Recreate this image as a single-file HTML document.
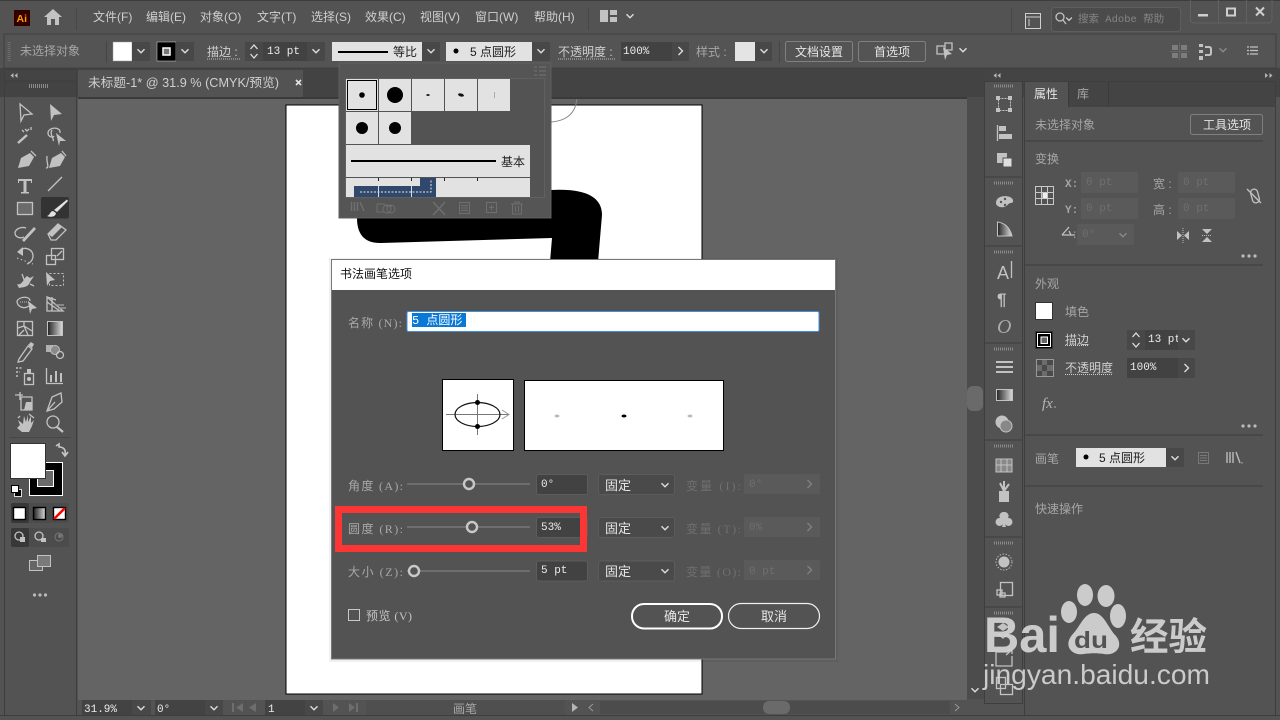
<!DOCTYPE html>
<html lang="zh"><head><meta charset="utf-8"><title>Illustrator</title>
<style>
html,body{margin:0;padding:0;background:#535353;width:1280px;height:720px;overflow:hidden}
svg{display:block}
text{font-family:"Liberation Sans","Noto Sans CJK SC",sans-serif;font-size:12px;fill:#c4c4c4}
.m{fill:#cfcfcf}
.d{fill:#a6a6a6}
.f{fill:#e6e6e6}
.k{fill:#1c1c1c}
.s{font-family:"Liberation Serif","Noto Sans CJK SC",serif;fill:#a8a8a8}
.t{font-family:"Liberation Mono","Noto Sans CJK SC",monospace;fill:#ececec;font-size:11px}
.o{font-family:"Liberation Mono","Noto Sans CJK SC",monospace;fill:#6f6f6f;font-size:11px}
.x{font-family:"Liberation Serif","Noto Sans CJK SC",serif;fill:#6f6f6f}
.i{fill:none;stroke:#c2c2c2;stroke-width:1.3}
.b{fill:#c2c2c2;stroke:none}
.c{fill:none;stroke:#dcdcdc;stroke-width:1.4}
.w{fill:#d6d6d6}
</style></head><body>
<svg width="1280" height="720" viewBox="0 0 1280 720" xmlns="http://www.w3.org/2000/svg">
<defs>
<path id="ch" d="M-3.5 -1.8L0 1.8L3.5 -1.8" fill="none" stroke="#dcdcdc" stroke-width="1.4"/>
<path id="ar" d="M-1.5 -4L2.5 0L-1.5 4" fill="none" stroke="#dcdcdc" stroke-width="1.4"/>
<linearGradient id="g" x1="0" x2="1"><stop offset="0" stop-color="#222"/><stop offset="1" stop-color="#ddd"/></linearGradient>
</defs>
<rect width="1280" height="720" fill="#535353"/>
<rect x="0" y="0" width="1280" height="1" fill="#3c3c3c"/>
<!-- canvas -->
<rect x="0" y="68" width="1280" height="29" fill="#434343"/>
<rect x="78" y="97" width="889" height="603" fill="#646464"/>
<rect x="967" y="97" width="17" height="603" fill="#4c4c4c"/>
<rect x="967" y="386" width="16" height="25" rx="6" fill="#6a6a6a"/>
<use href="#ch" transform="translate(975,690)"/>
<rect x="967" y="699" width="17" height="18" fill="#535353"/>
<rect x="286" y="105" width="416" height="589" fill="#fff" stroke="#000"/>
<path d="M577 97Q576 120 551 122" fill="none" stroke="#888"/>
<path d="M357 200L550 190Q602 187 602 215L598 262L550 262L552 238L380 243Q357 243 357 218Z" fill="#000"/>
<rect x="78" y="97" width="889" height="2" fill="#3a3a3a"/>

<!-- title bar -->
<rect x="14" y="10" width="16" height="16" fill="#330000"/>
<text x="16.500" y="22" style="font-size:10.500px;font-weight:bold;fill:#ff9a00">Ai</text>
<path d="M44 17L53 9L62 17H59V25H55V19H51V25H47V17Z" class="b"/>
<rect x="76" y="8" width="1" height="22" fill="#484848"/>
<text class="m" x="93" y="21">文件(F)</text>
<text class="m" x="146" y="21">编辑(E)</text>
<text class="m" x="200" y="21">对象(O)</text>
<text class="m" x="257" y="21">文字(T)</text>
<text class="m" x="311" y="21">选择(S)</text>
<text class="m" x="365" y="21">效果(C)</text>
<text class="m" x="420" y="21">视图(V)</text>
<text class="m" x="475" y="21">窗口(W)</text>
<text class="m" x="534" y="21">帮助(H)</text>
<rect x="588" y="8" width="1" height="22" fill="#484848"/>
<path d="M600 10H608V22H600ZM610 10H617V15H610ZM610 17H617V22H610Z" class="b"/>
<use href="#ch" transform="translate(630,16)"/>
<rect x="1011" y="8" width="1" height="24" fill="#484848"/>
<rect x="1025.500" y="13.500" width="15" height="15" fill="none" stroke="#cfcfcf"/><path d="M1026 17H1040M1029 19V26" stroke="#cfcfcf" fill="none"/>
<rect x="1051.500" y="7.500" width="129" height="24" rx="3" fill="#4b4b4b" stroke="#5e5e5e"/>
<circle cx="1060" cy="17" r="4" class="i"/><path d="M1063 20L1066 24" class="i"/><use href="#ch" transform="translate(1069,19) scale(.8)"/>
<text x="1078" y="22" style="font-family:'Liberation Mono','Noto Sans CJK SC',monospace;font-size:10.500px;fill:#858585">搜索 Adobe 帮助</text>
<path d="M1190.500 0V19Q1190.500 23 1194 23H1268Q1272 23 1272 19V0M1218.500 0V23M1246.500 0V23" fill="none" stroke="#626262"/>
<rect x="1198" y="14" width="10" height="2.500" fill="#cfcfcf"/>
<rect x="1227" y="8.500" width="8" height="7" fill="none" stroke="#cfcfcf" stroke-width="2"/>
<path d="M1256 7.500L1264 15.500M1264 7.500L1256 15.500" stroke="#cfcfcf" stroke-width="2"/>

<!-- control bar -->
<rect x="4" y="34" width="1272" height="34" fill="#545454" stroke="#3f3f3f"/>
<path d="M9 42V62" stroke="#6e6e6e" stroke-width="3" stroke-dasharray="1 1"/>
<text class="d" x="20" y="55">未选择对象</text>
<rect x="106" y="41" width="1" height="22" fill="#454545"/>
<rect x="113" y="42" width="19" height="19" fill="#fff" stroke="#999" stroke-width=".5"/>
<rect x="132" y="42" width="18" height="19" fill="#484848"/><use href="#ch" transform="translate(141,51)"/>
<rect x="157" y="42" width="19" height="19" fill="#000" stroke="#ddd" stroke-width=".5"/>
<rect x="163" y="48" width="7" height="7" fill="#777" stroke="#fff" stroke-width="1.500"/>
<rect x="176" y="42" width="18" height="19" fill="#484848"/><use href="#ch" transform="translate(185,51)"/>
<text class="m" x="207" y="56">描边 :</text>
<path d="M207 59H240" stroke="#bbb" stroke-dasharray="1 1"/>
<rect x="245" y="42" width="18" height="19" fill="#484848"/>
<path d="M250.500 49L254 45L257.500 49M250.500 54L254 58L257.500 54" fill="none" stroke="#dcdcdc" stroke-width="1.300"/>
<rect x="263" y="42" width="44" height="19" fill="#424242"/>
<text class="t" x="267" y="54">13 pt</text>
<rect x="307" y="42" width="18" height="19" fill="#484848"/><use href="#ch" transform="translate(316,51)"/>
<rect x="332" y="42" width="90" height="19" fill="#e2e2e2"/>
<rect x="338" y="51" width="50" height="2" fill="#000"/>
<text class="k" x="393" y="56">等比</text>
<rect x="422" y="42" width="18" height="19" fill="#484848"/><use href="#ch" transform="translate(431,51)"/>
<rect x="446" y="42" width="86" height="19" fill="#e2e2e2"/>
<circle cx="456" cy="51" r="2.500" fill="#000"/>
<text class="k" x="470" y="56">5 点圆形</text>
<rect x="532" y="42" width="18" height="19" fill="#484848"/><use href="#ch" transform="translate(541,51)"/>
<text class="m" x="558" y="56">不透明度 :</text>
<path d="M558 59H615" stroke="#bbb" stroke-dasharray="1 1"/>
<rect x="621" y="42" width="51" height="19" fill="#424242"/>
<text class="t" x="623" y="54">100%</text>
<rect x="672" y="42" width="17" height="19" fill="#484848"/><use href="#ar" transform="translate(680,51)"/>
<text class="d" x="696" y="56">样式 :</text>
<rect x="735" y="42" width="20" height="19" fill="#e4e4e4"/>
<rect x="755" y="42" width="17" height="19" fill="#484848"/><use href="#ch" transform="translate(764,51)"/>
<rect x="779" y="41" width="1" height="22" fill="#454545"/>
<rect x="785.500" y="41.500" width="67" height="20" rx="2" fill="none" stroke="#808080"/>
<text class="f" x="795" y="56">文档设置</text>
<rect x="858.500" y="41.500" width="67" height="20" rx="2" fill="none" stroke="#808080"/>
<text class="f" x="874" y="56">首选项</text>
<path d="M937 46H945V54H937ZM945 43H952V50H945Z" class="i"/><path d="M943 47L952 54L947 55L945 60Z" class="b"/>
<use href="#ch" transform="translate(963,50)"/>
<path d="M1172 45H1178V50H1172ZM1181 45H1187V50H1181ZM1172 53H1178V58H1172ZM1181 53H1187V58H1181Z" fill="#7d7d7d"/>
<path d="M1179.500 43V60M1170 51.500H1189" stroke="#666"/>
<path d="M1199 44H1203V47H1199ZM1199 50H1203V53H1199ZM1199 56H1203V60H1199Z" fill="#c2c2c2"/>
<path d="M1205 47H1209Q1211 47 1211 49V53Q1211 55 1209 55H1205" fill="none" stroke="#c2c2c2" stroke-width="2"/>
<use href="#ch" transform="translate(1223,50)" opacity=".4"/>
<path d="M1250 47H1258M1250 50.500H1258M1250 54H1258" stroke="#c2c2c2" stroke-width="1.300"/><path d="M1247 47H1249M1247 50.500H1249M1247 54H1249" stroke="#c2c2c2" stroke-width="1.300"/>

<!-- tab -->
<rect x="78" y="70" width="225" height="27" fill="#535353"/>
<text class="m" x="88" y="87" textLength="191" lengthAdjust="spacingAndGlyphs" style="font-size:12.500px">未标题-1* @ 31.9 % (CMYK/预览)</text>
<path d="M296 80L301 85M301 80L296 85" stroke="#e0e0e0" stroke-width="1.700"/>

<!-- left tools -->
<rect x="4" y="69" width="72" height="12" fill="#444"/>
<path d="M13.500 73L10.500 75.500L13.500 78ZM17.500 73L14.500 75.500L17.500 78Z" fill="#b5b5b5"/>
<rect x="4.500" y="69.500" width="72" height="646" fill="none" stroke="#3e3e3e"/>
<path d="M76 81H4" stroke="#3e3e3e"/>
<path d="M29 86H48" stroke="#8a8a8a" stroke-width="4" stroke-dasharray="1 1"/>
<path d="M20 104L32 114L24 115L21 121Z" class="i"/>
<path d="M50 104L62 114L54 115L51 121Z" class="b"/>
<path d="M18 143L27 135" stroke="#c2c2c2" stroke-width="2.500"/><path d="M25 129L27 131L29 129M31 127V130M22 130L24 132" class="i"/>
<path d="M60 133C61 126 48 127 48 133C48 137 53 138 54 136" class="i"/><path d="M52 130C49 135 55 139 53 141" class="i"/><path d="M56 133L66 141L60 141L59 146Z" class="b"/>
<path d="M30 153L34 157L29 166L18 168L21 158Z" class="b"/><path d="M31 151L36 156" class="i"/>
<path d="M61 153L65 157L60 166L49 168L52 158Z" class="b"/><path d="M62 151L66 156" class="i"/><path d="M47 156C46 162 50 168 46 168" class="i"/>
<path d="M18 179H32V183H31V181H26.500V192H29V193.500H21V192H23.500V181H19V183H18Z" class="b"/>
<path d="M48 191L62 177" class="i"/>
<rect x="17.500" y="202.500" width="15" height="12" fill="#6b6b6b" stroke="#c2c2c2" stroke-width="1.300"/>
<rect x="41" y="197" width="28" height="21.500" rx="2" fill="#333"/>
<path d="M67 199.500L68 201L57 212L54 210Z" fill="#e2e2e2"/><path d="M47 216C50 215.500 50 211 53 211L56 213C55.500 217 51 217.500 47 216Z" fill="#e2e2e2"/>
<path d="M26 228C20 226 15 230 15 233C15 237 20 239 24 237" class="i" stroke-width="2"/><path d="M22 240L34 227L36 229L24 242Z" class="b"/>
<path d="M48 234L58 224L66 230L56 240H51Z" class="i"/><path d="M48 234L58 224L62 227L52 237Z" class="b"/>
<path d="M20 250C26 246 33 250 33 256C33 260 30 263 27 264" class="i" stroke-width="1.700"/><path d="M17 252L23 247V256Z" class="b"/><path d="M17 258L33 264" fill="none" stroke="#c2c2c2" stroke-dasharray="1.500 2.500"/>
<rect x="46.500" y="255.500" width="9" height="9" class="i"/><rect x="51.500" y="248.500" width="12" height="11" class="i"/><path d="M57 256L62 251" class="i"/>
<path d="M17 284C22 286 24 278 27 276L30 278L34 276L30 282C28 288 22 287 19 288Z" class="b"/><path d="M22 274L25 282M30 284L34 286" class="i"/>
<path d="M46 272L55 280L50 281L47 286Z" class="b"/><rect x="49.500" y="273.500" width="14" height="12" fill="none" stroke="#c2c2c2" stroke-dasharray="2 2"/>
<path d="M30 301C30 296 20 296 17 301C17 306 23 310 29 306" class="i"/><path d="M20 302H29" stroke="#c2c2c2" stroke-dasharray="1 1"/><path d="M28 301L37 308L32 309L30 314Z" class="b"/>
<path d="M47 297L63 311H47Z" class="i"/><path d="M47 297L56 300M47 302L60 311M52 297V311" class="i" stroke-width=".8"/><path d="M55 305H64M58 308H66" stroke="#999" stroke-width="1.500"/>
<rect x="17.500" y="321.500" width="15" height="14" class="i"/><path d="M18 328L24 326L24 322M24 326L32 331M24 326L28 335M19 335L24 330" class="i" stroke-width=".9"/>
<rect x="47.500" y="321.500" width="15" height="14" fill="url(#g)" stroke="#c2c2c2"/>
<path d="M19 359L28 346L32 349L23 361L18 362Z" class="i"/><path d="M28 345L31 342L34 344L32 348Z" class="b"/>
<rect x="46" y="345" width="7" height="7" fill="#b0b0b0"/><circle cx="55" cy="350" r="4.500" fill="#8a8a8a" stroke="#c2c2c2"/><circle cx="60" cy="355" r="3.500" class="i"/>
<path d="M16 368H22M16 372H20M16 376H19" stroke="#c2c2c2" stroke-dasharray="2 1.500" stroke-width="1.500"/><rect x="24.500" y="373.500" width="9" height="11" class="i"/><rect x="27" y="369" width="4" height="4" class="b"/><circle cx="29" cy="379" r="2" class="b"/>
<path d="M46.500 368V383.500H63" class="i"/><path d="M50 382V375H52V382ZM55 382V371H57V382ZM60 382V373H62V382Z" class="b"/>
<path d="M15 395H23M20 392V400" class="i"/><path d="M21 397H32V410H21Z" class="i"/><path d="M26 402L32 402V410H24Z" class="b"/>
<path d="M47 411L52 397L61 393L62 402L54 409Z" class="i"/><path d="M47 411L55 402" class="i"/>
<path d="M18 420L20 425L17 428L22 432H29L32 426L34 420L31 423V416L28 422V415L26 422L24 416L23 424Z" class="b"/><path d="M20 416L18 418M29 414L34 418" class="i"/>
<circle cx="53" cy="422" r="6" class="i" stroke-width="1.600"/><path d="M57 427L63 432" stroke="#c2c2c2" stroke-width="2.200"/>
<rect x="10" y="437" width="60" height="1" fill="#474747"/>
<rect x="29.500" y="462.500" width="33" height="33" fill="#000" stroke="#fff"/>
<rect x="37.500" y="470.500" width="16" height="16" fill="#6a6a6a" stroke="#fff"/>
<rect x="10.500" y="443.500" width="35" height="35" fill="#fff" stroke="#333"/>
<path d="M56 446L59 444V447C64 447 66 450 65 455M62 452L65 456L68 452" fill="none" stroke="#c6c6c6" stroke-width="1.600"/>
<rect x="14.500" y="489.500" width="7" height="7" fill="#000" stroke="#ddd"/><rect x="11.500" y="485.500" width="7" height="7" fill="#fff" stroke="#000"/>
<rect x="11" y="503" width="58" height="20" rx="2" fill="#4c4c4c"/><rect x="11" y="503" width="18" height="20" rx="2" fill="#383838"/>
<rect x="13.500" y="507.500" width="12" height="12" fill="#fff" stroke="#000" stroke-width="1.400"/>
<rect x="33.500" y="507.500" width="12" height="12" fill="url(#g)" stroke="#000" stroke-width="1.400"/>
<rect x="53.500" y="507.500" width="12" height="12" fill="#fff" stroke="#000" stroke-width="1.400"/><path d="M54 519L65 508" stroke="#f00" stroke-width="2.500"/>
<rect x="11" y="528" width="58" height="19" rx="2" fill="#4c4c4c"/><rect x="11" y="528" width="18" height="19" rx="2" fill="#383838"/>
<circle cx="19" cy="536" r="4" class="i"/><rect x="20" y="537" width="5" height="5" class="b"/>
<circle cx="39" cy="536" r="4" class="i"/><rect x="41" y="538" width="5" height="4" class="b"/>
<circle cx="59" cy="537" r="4" fill="none" stroke="#777"/><circle cx="60" cy="536" r="2" fill="#777"/>
<rect x="29.500" y="560.500" width="13" height="10" fill="#666" stroke="#c2c2c2"/><rect x="37.500" y="555.500" width="13" height="11" fill="#7a7a7a" stroke="#c2c2c2"/>
<circle cx="34.500" cy="595" r="1.600" fill="#bbb"/><circle cx="40" cy="595" r="1.600" fill="#bbb"/><circle cx="45.500" cy="595" r="1.600" fill="#bbb"/>

<!-- status bar -->
<rect x="78" y="700" width="889" height="16" fill="#535353"/>
<rect x="82" y="700" width="50" height="15" fill="#434343"/><text class="t" x="84" y="712">31.9%</text>
<rect x="132" y="700" width="19" height="15" fill="#484848"/><use href="#ch" transform="translate(141,708)"/>
<rect x="155" y="700" width="50" height="15" fill="#434343"/><text class="t" x="157" y="712">0°</text>
<rect x="205" y="700" width="18" height="15" fill="#484848"/><use href="#ch" transform="translate(214,708)"/>
<path d="M232 703H234V712H232ZM243 703V712L236 707.500ZM256 703V712L249 707.500Z" fill="#6e6e6e"/>
<rect x="265" y="700" width="40" height="15" fill="#434343"/><text class="t" x="268" y="712">1</text>
<rect x="305" y="700" width="18" height="15" fill="#484848"/><use href="#ch" transform="translate(314,708)"/>
<path d="M333 703V712L339 707.500ZM349 703V712L355 707.500ZM356 703H358V712H356Z" fill="#6e6e6e"/>
<rect x="366" y="700" width="199" height="15" fill="#4f4f4f"/>
<text class="d" x="453" y="713">画笔</text>
<path d="M572 703V712L578 707.500Z" fill="#b5b5b5"/>
<path d="M593 704L589 707.500L593 711" fill="none" stroke="#999"/>
<rect x="600" y="701" width="350" height="13" fill="#4c4c4c"/><rect x="763" y="701" width="27" height="13" rx="6" fill="#6a6a6a"/>
<path d="M955 704L959 707.500L955 711" fill="none" stroke="#999"/>
<rect x="0" y="715" width="1280" height="1" fill="#3e3e3e"/>

<!-- right dock -->
<rect x="984" y="69" width="292" height="13" fill="#444"/>
<path d="M996.500 73L993.500 75.500L996.500 78ZM1000.500 73L997.500 75.500L1000.500 78Z" fill="#b5b5b5"/>
<path d="M1265 73L1268 75.500L1265 78ZM1269.500 73L1272.500 75.500L1269.500 78Z" fill="#b5b5b5"/>
<rect x="984.500" y="81.500" width="38" height="622" fill="#535353" stroke="#3e3e3e"/>
<path d="M985 177H1022M985 246H1022M985 343H1022M985 440H1022M985 537H1022M985 607H1022" stroke="#3e3e3e"/>
<path d="M994 86H1013M994 183H1013M994 252H1013M994 349H1013M994 446H1013M994 543H1013M994 613H1013" stroke="#8a8a8a" stroke-width="3" stroke-dasharray="1 1"/>
<rect x="998.500" y="98.500" width="12" height="12" fill="none" stroke="#c2c2c2" stroke-dasharray="2 1"/><path d="M996 96H1000V100H996ZM1008 96H1012V100H1008ZM996 108H1000V112H996ZM1008 108H1012V112H1008Z" class="b"/>
<path d="M997.500 125V141" class="i"/><rect x="999" y="126" width="7" height="5" class="b"/><rect x="999" y="134" width="13" height="5" class="b"/>
<rect x="997" y="153" width="10" height="10" class="b"/><rect x="1003" y="158" width="9" height="9" fill="#dedede" stroke="#535353"/>
<path d="M996 203C996 196 1005 195 1010 197C1014 199 1014 203 1011 203C1008 203 1008 206 1004 207C1000 208 996 206 996 203Z" class="b"/><circle cx="1001" cy="202" r="1.200" fill="#535353"/><circle cx="1005" cy="199" r="1.200" fill="#535353"/><circle cx="1005" cy="205" r="1.200" fill="#535353"/>
<path d="M997.500 222C1005 223 1010 228 1012 236H997.500Z" fill="url(#g)" stroke="#c2c2c2"/>
<text x="997" y="279" style="font-size:18px;fill:#c2c2c2">A</text><path d="M1011.500 261V278" class="i"/>
<text x="997" y="305" style="font-size:17px;font-weight:bold;fill:#c2c2c2">¶</text>
<text x="997" y="333" style="font-size:20px;font-style:italic;font-family:'Liberation Serif',serif;fill:#aaa">O</text>
<path d="M996 362H1013M996 367H1013M996 372H1013" stroke="#c2c2c2" stroke-width="2"/>
<rect x="996.500" y="389.500" width="16" height="11" fill="url(#g)" stroke="#c2c2c2"/>
<circle cx="1002" cy="422" r="6.500" fill="#c2c2c2"/><circle cx="1006" cy="426" r="6" fill="#888" stroke="#c2c2c2"/>
<path d="M996 459H1012V472H996ZM996 465H1012M1001 459V472M1007 459V472" fill="#888" stroke="#c2c2c2"/>
<path d="M999 491H1009V502H999Z" class="b"/><path d="M1004 491L1000 483M1004 491V481M1004 491L1009 484" stroke="#c2c2c2" stroke-width="2"/>
<path d="M1004 512A4 4 0 0 1 1008 518A4 4 0 1 1 1005 524L1006 527H1002L1003 524A4 4 0 1 1 1000 518A4 4 0 0 1 1004 512Z" class="b"/>
<circle cx="1004" cy="562" r="5.500" class="b"/><circle cx="1004" cy="562" r="8" fill="none" stroke="#bbb" stroke-dasharray="1.500 1.500"/>
<rect x="1000.500" y="582.500" width="12" height="13" class="i"/><rect x="997" y="590" width="5" height="5" class="i"/><rect x="1000" y="593" width="5" height="4" class="i"/>
<path d="M997 627L1003 623L1009 627L1003 631Z" class="b"/><path d="M998 634L1003 638L1008 634" class="i"/>
<path d="M1009 652H996V666H1012V656" class="i"/><path d="M1006 655L1012 650M1008 650H1012V654" class="i"/>
<rect x="996.500" y="677.500" width="9" height="11" class="i"/><rect x="1000.500" y="684.500" width="12" height="10" class="i"/>

<!-- right panel -->
<rect x="1024.500" y="81.500" width="251" height="634" fill="#535353" stroke="#3e3e3e"/>
<rect x="1025" y="82" width="250" height="25" fill="#444"/>
<rect x="1025" y="82" width="43" height="26" fill="#535353"/>
<path d="M1068.500 82V107M1108.500 82V107" stroke="#3a3a3a"/>
<text class="f" x="1034" y="98">属性</text>
<text class="d" x="1077" y="98">库</text>
<text class="d" x="1035" y="129">未选择对象</text>
<rect x="1190.500" y="114.500" width="72" height="20" rx="2" fill="none" stroke="#808080"/>
<text class="f" x="1203" y="129">工具选项</text>
<rect x="1025" y="140" width="238" height="2" fill="#484848"/>
<text class="d" x="1035" y="163">变换</text>
<path d="M1035.500 186.500H1041.500V192.500H1035.500ZM1041.500 186.500H1047.500V192.500H1041.500ZM1047.500 186.500H1053.500V192.500H1047.500ZM1035.500 192.500H1041.500V198.500H1035.500ZM1047.500 192.500H1053.500V198.500H1047.500ZM1035.500 198.500H1041.500V204.500H1035.500ZM1041.500 198.500H1047.500V204.500H1041.500ZM1047.500 198.500H1053.500V204.500H1047.500Z" fill="none" stroke="#c8c8c8"/>
<rect x="1042.500" y="193" width="4.500" height="5" fill="#eee"/>
<text class="d" x="1065" y="187" style="font-family:'Liberation Mono',monospace;font-weight:bold;font-size:11px">X:</text>
<rect x="1081" y="172" width="57" height="21" rx="1" fill="#5a5a5a"/><text class="o" x="1086" y="185">0 pt</text>
<text class="d" x="1065" y="213" style="font-family:'Liberation Mono',monospace;font-weight:bold;font-size:11px">Y:</text>
<rect x="1081" y="198" width="57" height="21" rx="1" fill="#5a5a5a"/><text class="o" x="1086" y="211">0 pt</text>
<text class="d" x="1153" y="188">宽 :</text>
<rect x="1178" y="172" width="57" height="21" rx="1" fill="#5a5a5a"/><text class="o" x="1183" y="185">0 pt</text>
<text class="d" x="1153" y="214">高 :</text>
<rect x="1178" y="198" width="57" height="21" rx="1" fill="#5a5a5a"/><text class="o" x="1183" y="211">0 pt</text>
<path d="M1247 189L1261 203" class="i"/><rect x="1251.500" y="189" width="7" height="14" rx="3.500" class="i" transform="rotate(-15 1255 196)"/>
<path d="M1062 235L1069 227M1062 235H1075M1069 231L1071 235" class="i"/><text class="d" x="1073" y="238">:</text>
<rect x="1077" y="224" width="57" height="21" rx="1" fill="#5a5a5a"/><text class="o" x="1082" y="237">0°</text>
<use href="#ch" transform="translate(1123,235)" opacity=".35"/>
<path d="M1177 231L1182 235.500L1177 240ZM1189 231V240L1184 235.500Z" class="b"/><path d="M1183 228V243" stroke="#bbb" stroke-dasharray="1 1"/>
<path d="M1202 229H1212L1207 234ZM1202 242H1212L1207 237Z" class="b"/><path d="M1202 235.500H1212" stroke="#bbb" stroke-dasharray="1 1"/>
<circle cx="1243" cy="256" r="1.600" fill="#bbb"/><circle cx="1249" cy="256" r="1.600" fill="#bbb"/><circle cx="1255" cy="256" r="1.600" fill="#bbb"/>
<rect x="1025" y="264" width="238" height="2" fill="#484848"/>
<text class="d" x="1035" y="288">外观</text>
<rect x="1035.500" y="302.500" width="17" height="17" fill="#fff" stroke="#333"/>
<text class="d" x="1065" y="316">填色</text>
<rect x="1035.500" y="331.500" width="17" height="17" fill="#000" stroke="#333"/><rect x="1037.500" y="333.500" width="13" height="13" fill="none" stroke="#fff"/><rect x="1041" y="337" width="6.500" height="6.500" fill="#666" stroke="#fff"/>
<text class="m" x="1065" y="344">描边</text><path d="M1065 345.500H1089" stroke="#ccc" stroke-dasharray="1 1"/>
<rect x="1127" y="330" width="18" height="20" fill="#484848"/><path d="M1132.500 337L1136 333L1139.500 337M1132.500 343L1136 347L1139.500 343" fill="none" stroke="#dcdcdc" stroke-width="1.300"/>
<rect x="1145" y="330" width="33" height="20" fill="#424242"/><text class="t" x="1148" y="342">13 pt</text>
<rect x="1178" y="330" width="17" height="20" fill="#484848"/><use href="#ch" transform="translate(1186,340)"/>
<rect x="1036.500" y="359.500" width="17" height="17" fill="#6c6c6c" stroke="#999"/><path d="M1037 360H1042V365H1037ZM1047 360H1053V365H1047ZM1042 365H1047V371H1042ZM1037 371H1042V376H1037ZM1047 371H1053V376H1047Z" fill="#4a4a4a"/>
<text class="m" x="1065" y="372">不透明度</text><path d="M1065 374.500H1113" stroke="#ccc" stroke-dasharray="1 1"/>
<rect x="1127" y="358" width="51" height="20" fill="#424242"/><text class="t" x="1130" y="370">100%</text>
<rect x="1178" y="358" width="17" height="20" fill="#484848"/><use href="#ar" transform="translate(1186,368)"/>
<text x="1042" y="408" style="font-family:'Liberation Serif',serif;font-style:italic;font-size:15px;fill:#b5b5b5">fx</text><circle cx="1055" cy="407" r=".8" fill="#b5b5b5"/>
<circle cx="1243" cy="426" r="1.600" fill="#bbb"/><circle cx="1249" cy="426" r="1.600" fill="#bbb"/><circle cx="1255" cy="426" r="1.600" fill="#bbb"/>
<rect x="1025" y="434" width="238" height="2" fill="#484848"/>
<text class="d" x="1035" y="463">画笔</text>
<rect x="1076" y="448" width="90" height="19" fill="#e2e2e2"/><circle cx="1086" cy="457" r="2.500" fill="#000"/>
<text class="k" x="1099" y="462">5 点圆形</text>
<rect x="1166" y="448" width="18" height="19" fill="#484848"/><use href="#ch" transform="translate(1175,458)"/>
<rect x="1198.500" y="452.500" width="10" height="11" fill="none" stroke="#787878"/><path d="M1200 455.500H1207M1200 458H1207M1200 460.500H1207" stroke="#787878"/>
<path d="M1227 452V463M1230 452V463M1233 452V463M1236 452L1240 463" stroke="#b5b5b5" stroke-width="1.500"/><circle cx="1242" cy="463" r=".7" fill="#b5b5b5"/>
<rect x="1025" y="485" width="238" height="2" fill="#484848"/>
<text class="d" x="1035" y="513">快速操作</text>

<!-- brush panel -->
<rect x="339" y="63" width="212" height="155" fill="#555" stroke="#5e5e5e"/>
<path d="M534 67H537M534 71H537M534 75H537M539 67H546M539 71H546M539 75H546" stroke="#6e6e6e" stroke-width="1.300"/>
<rect x="345.500" y="78.500" width="199" height="119" fill="#535353" stroke="#606060"/>
<g fill="#e2e2e2">
<rect x="346" y="79" width="32" height="32"/><rect x="379" y="79" width="32" height="32"/><rect x="412" y="79" width="32" height="32"/><rect x="445" y="79" width="32" height="32"/><rect x="478" y="79" width="32" height="32"/>
<rect x="346" y="112" width="32" height="32"/><rect x="379" y="112" width="32" height="32"/>
<rect x="346" y="145" width="184" height="32"/><rect x="346" y="178" width="184" height="19"/>
</g>
<rect x="347.500" y="80.500" width="29" height="29" fill="none" stroke="#000"/>
<circle cx="362" cy="95" r="2.800" fill="#000"/><circle cx="395" cy="95" r="8" fill="#000"/>
<ellipse cx="428" cy="95" rx="1.700" ry="1" fill="#222"/><ellipse cx="461" cy="95" rx="3" ry="1.500" fill="#111" transform="rotate(15 461 95)"/>
<path d="M494.500 92V98" stroke="#aaa"/>
<circle cx="362" cy="128" r="6" fill="#000"/><circle cx="395" cy="128" r="6" fill="#000"/>
<rect x="351" y="160" width="145" height="2" fill="#000"/>
<text x="501" y="166" style="font-size:12px;fill:#222">基本</text>
<path d="M378.500 178V181M411.500 178V181M444.500 178V181M477.500 178V181" stroke="#222"/>
<path d="M354 186H420V178H436V197H354Z" fill="#2f486b"/>
<path d="M360 192H431V180" fill="none" stroke="#e8e8e8" stroke-dasharray="2 1.500"/>
<path d="M378.500 186V197M411.500 186V197" stroke="#ddd"/>
<g stroke="#6f6f6f" fill="none">
<path d="M351.500 202V211M354.500 202V211M357.500 202V211M360 202L364 211" stroke-width="1.500"/>
<path d="M377 204H384L386 206H392M377 204V212H384" /><circle cx="387" cy="209" r="4"/><circle cx="391" cy="209" r="4"/>
<path d="M433 202L445 215M445 202L437 211L433 215" stroke-width="1.500"/>
<rect x="459.500" y="202.500" width="10" height="11"/><path d="M461 205.500H468M461 208H468M461 210.500H468"/>
<rect x="486.500" y="202.500" width="10" height="10"/><path d="M491.500 205V210M489 207.500H494"/>
<path d="M511 204H523M515 204V202H519V204M512.500 204V214H521.500V204M515.500 206V212M518.500 206V212"/>
</g>

<!-- dialog -->
<rect x="329" y="258" width="509" height="404" fill="#000" opacity=".06"/>
<rect x="331.500" y="259.500" width="504" height="399.500" fill="#535353" stroke="#777"/>
<rect x="332" y="260" width="503" height="30" fill="#fff"/>
<text x="340" y="278" style="font-size:12px;fill:#111">书法画笔选项</text>
<text class="s" x="348" y="327" textLength="54">名称 (N):</text>
<rect x="407" y="311.500" width="412" height="20" rx="1.500" fill="#fff" stroke="#3d8fe0"/>
<rect x="412" y="313" width="54" height="14" fill="#0a78d7"/>
<text x="412" y="324" style="font-family:'Liberation Mono','Noto Sans CJK SC',monospace;font-size:12px;fill:#fff">5 点圆形</text>
<rect x="442.500" y="379.500" width="71" height="71" fill="#fff" stroke="#000"/>
<path d="M446 414.500H509M477.500 394V435" stroke="#777"/><path d="M502 410L509 414.500L502 419" fill="none" stroke="#999"/>
<ellipse cx="477.500" cy="414.500" rx="22.500" ry="12" fill="none" stroke="#111" stroke-width="1.200"/>
<circle cx="477.500" cy="402.500" r="2.500" fill="#000"/><circle cx="477.500" cy="426.500" r="2.500" fill="#000"/>
<rect x="524.500" y="380.500" width="199" height="70" fill="#fff" stroke="#000"/>
<ellipse cx="557" cy="416" rx="2.500" ry="1.500" fill="#bbb"/><ellipse cx="624" cy="416" rx="2.500" ry="1.500" fill="#000"/><ellipse cx="690" cy="416" rx="2.500" ry="1.500" fill="#bbb"/>

<text class="s" x="348" y="490" textLength="55">角度 (A):</text>
<rect x="407" y="483" width="123" height="2" fill="#6e6e6e"/>
<circle cx="469" cy="484" r="5" fill="#535353" stroke="#c8c8c8" stroke-width="2.400"/>
<rect x="536.500" y="474.500" width="51" height="20" rx="2" fill="#424242" stroke="#5c5c5c"/><text class="t" x="541" y="487">0°</text>
<rect x="598.500" y="474.500" width="76" height="20" rx="2" fill="#4a4a4a" stroke="#5c5c5c"/><text class="f" x="605" y="490" style="font-size:13px">固定</text><use href="#ch" transform="translate(665,485)"/>
<text class="x" x="686" y="490" textLength="55">变量 (I):</text>
<rect x="744" y="474" width="76" height="20" rx="1" fill="#5a5a5a"/><text class="o" x="749" y="487">0°</text><use href="#ar" transform="translate(809,484)" opacity=".3"/>

<text class="s" x="348" y="533" textLength="55">圆度 (R):</text>
<rect x="407" y="526" width="123" height="2" fill="#6e6e6e"/>
<circle cx="472" cy="527" r="5" fill="#535353" stroke="#c8c8c8" stroke-width="2.400"/>
<rect x="536.500" y="517.500" width="51" height="20" rx="2" fill="#424242" stroke="#5c5c5c"/><text class="t" x="541" y="530">53%</text>
<rect x="598.500" y="517.500" width="76" height="20" rx="2" fill="#4a4a4a" stroke="#5c5c5c"/><text class="f" x="605" y="533" style="font-size:13px">固定</text><use href="#ch" transform="translate(665,528)"/>
<text class="x" x="686" y="533" textLength="55">变量 (T):</text>
<rect x="744" y="517" width="76" height="20" rx="1" fill="#5a5a5a"/><text class="o" x="749" y="530">0%</text><use href="#ar" transform="translate(809,527)" opacity=".3"/>

<text class="s" x="348" y="576" textLength="55">大小 (Z):</text>
<rect x="407" y="570" width="123" height="2" fill="#6e6e6e"/>
<circle cx="414" cy="571" r="5" fill="#535353" stroke="#c8c8c8" stroke-width="2.400"/>
<rect x="536.500" y="561" width="51" height="20" rx="2" fill="#424242" stroke="#5c5c5c"/><text class="t" x="541" y="573">5 pt</text>
<rect x="598.500" y="561" width="76" height="20" rx="2" fill="#4a4a4a" stroke="#5c5c5c"/><text class="f" x="605" y="576" style="font-size:13px">固定</text><use href="#ch" transform="translate(665,571)"/>
<text class="x" x="686" y="576" textLength="55">变量 (O):</text>
<rect x="744" y="560" width="76" height="20" rx="1" fill="#5a5a5a"/><text class="o" x="749" y="574">0 pt</text><use href="#ar" transform="translate(809,570)" opacity=".3"/>

<rect x="338.500" y="509.500" width="245" height="39" fill="none" stroke="#fc3535" stroke-width="7"/>

<rect x="348.500" y="609.500" width="11" height="11" fill="none" stroke="#c8c8c8"/>
<text class="s" x="366" y="620" textLength="46" style="fill:#c4c4c4">预览 (V)</text>
<rect x="632" y="604" width="90" height="24.500" rx="12" fill="none" stroke="#fff" stroke-width="2"/>
<text class="f" x="664" y="621" style="font-size:13px">确定</text>
<rect x="728.500" y="603.500" width="91" height="25" rx="12.500" fill="none" stroke="#f0f0f0" stroke-width="1.200"/>
<text class="f" x="761" y="621" style="font-size:13px">取消</text>

<!-- watermark -->
<g opacity=".92">
<ellipse class="w" cx="1085" cy="595" rx="8" ry="11"/>
<ellipse class="w" cx="1106" cy="596" rx="8.500" ry="11"/>
<ellipse class="w" cx="1069" cy="612" rx="8" ry="11"/>
<ellipse class="w" cx="1118" cy="616" rx="8" ry="12"/>
<path class="w" d="M1094 613C1104 613 1108 628 1116 636C1124 646 1116 656 1104 654C1097 653 1091 653 1084 654C1072 656 1063 646 1072 635C1080 627 1084 613 1094 613Z"/>
<text x="1074" y="648" textLength="34" lengthAdjust="spacingAndGlyphs" style="font-size:23px;font-weight:bold;fill:#535353">du</text>
<text class="w" x="984" y="652" textLength="76" lengthAdjust="spacingAndGlyphs" style="font-size:50px;font-weight:bold;fill:#d6d6d6">Bai</text>
<text x="1130" y="650" textLength="77" lengthAdjust="spacingAndGlyphs" style="font-size:38px;font-weight:bold;fill:#d6d6d6">经验</text>
<text x="983" y="684" textLength="227" lengthAdjust="spacingAndGlyphs" style="font-size:28px;fill:#d6d6d6">jingyan.baidu.com</text>
</g>
</svg>
</body></html>
